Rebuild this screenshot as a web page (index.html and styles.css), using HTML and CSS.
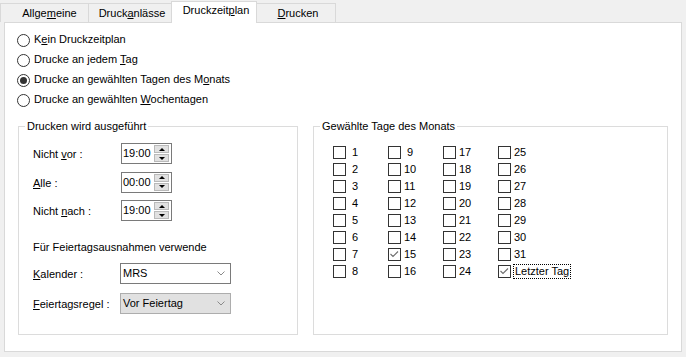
FILE: index.html
```html
<!DOCTYPE html>
<html lang="de">
<head>
<meta charset="utf-8">
<title>Druckzeitplan</title>
<link rel="stylesheet" href="styles.css">
</head>
<body>
<div class="dialog">
  <div class="tabs">
    <div class="tab t1">Allge<u>m</u>eine</div>
    <div class="tab t2">Druck<u>a</u>nlässe</div>
    <div class="tab t3 active">Druckzeit<u>p</u>lan</div>
    <div class="tab t4"><u>D</u>rucken</div>
  </div>
  <div class="panel">
    <div class="radios">
      <div class="radio"><span class="rb"></span><span>K<u>e</u>in Druckzeitplan</span></div>
      <div class="radio"><span class="rb"></span><span>Drucke an jedem <u>T</u>ag</span></div>
      <div class="radio"><span class="rb on"></span><span>Drucke an gewählten Tagen des M<u>o</u>nats</span></div>
      <div class="radio"><span class="rb"></span><span>Drucke an gewählten <u>W</u>ochentagen</span></div>
    </div>
    <div class="groups">
      <div class="group g1">
        <div class="gtitle">Drucken wird ausgeführt</div>
        <div class="times">
          <div class="row"><span class="lbl">Nicht <u>v</u>or :</span><span class="spin"><span class="val">19:00</span><span class="btns"><span class="ud"><i class="up"></i></span><span class="ud"><i class="dn"></i></span></span></span></div>
          <div class="row"><span class="lbl"><u>A</u>lle :</span><span class="spin"><span class="val">00:00</span><span class="btns"><span class="ud"><i class="up"></i></span><span class="ud"><i class="dn"></i></span></span></span></div>
          <div class="row"><span class="lbl">Nicht <u>n</u>ach :</span><span class="spin"><span class="val">19:00</span><span class="btns"><span class="ud"><i class="up"></i></span><span class="ud"><i class="dn"></i></span></span></span></div>
        </div>
        <div class="holiday">Für Feiertagsausnahmen verwende</div>
        <div class="crow first"><span class="lbl"><u>K</u>alender :</span><span class="combo"><span class="ctext">MRS</span><svg class="chev" width="8" height="5" viewBox="0 0 8 5"><polyline points="0.5,0.5 4,4 7.5,0.5" fill="none" stroke="#8a8a8a" stroke-width="1"/></svg></span></div>
        <div class="crow"><span class="lbl"><u>F</u>eiertagsregel :</span><span class="combo list"><span class="ctext">Vor Feiertag</span><svg class="chev" width="8" height="5" viewBox="0 0 8 5"><polyline points="0.5,0.5 4,4 7.5,0.5" fill="none" stroke="#8a8a8a" stroke-width="1"/></svg></span></div>
      </div>
      <div class="group g2">
        <div class="gtitle">Gewählte Tage des Monats</div>
        <div class="days">
          <div class="day"><span class="cb"></span><span class="t pad">1</span></div>
          <div class="day"><span class="cb"></span><span class="t pad">2</span></div>
          <div class="day"><span class="cb"></span><span class="t pad">3</span></div>
          <div class="day"><span class="cb"></span><span class="t pad">4</span></div>
          <div class="day"><span class="cb"></span><span class="t pad">5</span></div>
          <div class="day"><span class="cb"></span><span class="t pad">6</span></div>
          <div class="day"><span class="cb"></span><span class="t pad">7</span></div>
          <div class="day"><span class="cb"></span><span class="t pad">8</span></div>
          <div class="day"><span class="cb"></span><span class="t pad">9</span></div>
          <div class="day"><span class="cb"></span><span class="t">10</span></div>
          <div class="day"><span class="cb"></span><span class="t">11</span></div>
          <div class="day"><span class="cb"></span><span class="t">12</span></div>
          <div class="day"><span class="cb"></span><span class="t">13</span></div>
          <div class="day"><span class="cb"></span><span class="t">14</span></div>
          <div class="day"><span class="cb"><svg width="11" height="11" viewBox="0 0 11 11"><polyline points="1.5,5 4,7.5 9,2.5" fill="none" stroke="#6e6e6e" stroke-width="1.1"/></svg></span><span class="t">15</span></div>
          <div class="day"><span class="cb"></span><span class="t">16</span></div>
          <div class="day"><span class="cb"></span><span class="t">17</span></div>
          <div class="day"><span class="cb"></span><span class="t">18</span></div>
          <div class="day"><span class="cb"></span><span class="t">19</span></div>
          <div class="day"><span class="cb"></span><span class="t">20</span></div>
          <div class="day"><span class="cb"></span><span class="t">21</span></div>
          <div class="day"><span class="cb"></span><span class="t">22</span></div>
          <div class="day"><span class="cb"></span><span class="t">23</span></div>
          <div class="day"><span class="cb"></span><span class="t">24</span></div>
          <div class="day"><span class="cb"></span><span class="t">25</span></div>
          <div class="day"><span class="cb"></span><span class="t">26</span></div>
          <div class="day"><span class="cb"></span><span class="t">27</span></div>
          <div class="day"><span class="cb"></span><span class="t">28</span></div>
          <div class="day"><span class="cb"></span><span class="t">29</span></div>
          <div class="day"><span class="cb"></span><span class="t">30</span></div>
          <div class="day"><span class="cb"></span><span class="t">31</span></div>
          <div class="day"><span class="cb"><svg width="11" height="11" viewBox="0 0 11 11"><polyline points="1.5,5 4,7.5 9,2.5" fill="none" stroke="#6e6e6e" stroke-width="1.1"/></svg></span><span class="focus">Letzter Tag</span></div>
        </div>
      </div>
    </div>
  </div>
</div>
</body>
</html>
```

FILE: styles.css
```css
* { box-sizing: border-box; }
html, body { margin: 0; padding: 0; }
body {
  background: #f0f0f0;
  font-family: "Liberation Sans", Arial, sans-serif;
  font-size: 11px;
  line-height: 13px;
  color: #000;
}
u { text-decoration: underline; text-underline-offset: 1px; }

.dialog { width: 686px; height: 357px; }

.tabs { display: flex; align-items: flex-end; height: 22px; }
.tab {
  height: 19px;
  border: 1px solid #d9d9d9;
  border-bottom: none;
  background: #f0f0f0;
  padding-top: 3px;
  text-align: center;
  white-space: nowrap;
  margin-left: -1px;
  padding-left: 4px;
}
.t1 { width: 89px; margin-left: 0; padding-left: 10px; }
.t2 { width: 84px; }
.t3 { width: 86px; }
.t4 { width: 80px; }
.tab.active {
  height: 22px;
  margin-bottom: -1px;
  background: #fff;
  position: relative;
  z-index: 1;
  padding-top: 2px;
}

.panel {
  margin-left: 4px;
  width: 678px;
  height: 330px;
  border: 1px solid #d9d9d9;
  background: #fff;
  padding: 6px 0 0 12px;
}

.radio { display: flex; align-items: center; height: 20px; }
.rb {
  width: 13px; height: 13px;
  border: 1px solid #333;
  border-radius: 50%;
  margin: 2px 4px 0 0;
  background: #fff;
  display: flex; align-items: center; justify-content: center;
  flex: none;
}
.rb.on::after {
  content: "";
  width: 7px; height: 7px;
  border-radius: 50%;
  background: #333;
}

.groups { display: flex; gap: 15px; margin: 17px 0 0 1px; }
.group { border: 1px solid #dcdcdc; height: 209px; }
.g1 { width: 280px; }
.g2 { width: 355px; }
.gtitle {
  width: fit-content;
  margin: -7px 0 0 6px;
  padding: 0 2px;
  background: #fff;
  white-space: nowrap;
}

.times { margin-top: 10px; padding-left: 14px; display: flex; flex-direction: column; gap: 7.5px; }
.row { display: flex; align-items: center; height: 21px; }
.lbl { width: 88px; padding-top: 2px; flex: none; }
.spin {
  width: 51px; height: 21px;
  border: 1px solid #7a7a7a;
  display: flex; align-items: center;
  padding-left: 1px;
}
.val { flex: 1; }
.btns { width: 15px; height: 17px; display: flex; flex-direction: column; gap: 1px; margin-right: 2px; }
.ud {
  flex: 1;
  background: #e1e1e1;
  border: 1px solid #b9b9b9;
  display: flex; align-items: center; justify-content: center;
}
.up { width: 0; height: 0; border-left: 3px solid transparent; border-right: 3px solid transparent; border-bottom: 3px solid #000; }
.dn { width: 0; height: 0; border-left: 3px solid transparent; border-right: 3px solid transparent; border-top: 3px solid #000; }

.holiday { padding-left: 14px; margin-top: 19.5px; }
.crow { display: flex; align-items: center; height: 21px; padding-left: 14px; margin-top: 9px; }
.crow.first { margin-top: 9.5px; }
.combo {
  width: 111px; height: 21px;
  margin-left: -1px;
  border: 1px solid #7a7a7a;
  background: #fff;
  display: flex; align-items: center;
  padding-left: 2px;
}
.combo.list { background: #e1e1e1; border-color: #adadad; }
.ctext { flex: 1; }
.chev { margin-right: 5px; flex: none; }

.days {
  margin-top: 11px;
  padding-left: 19px;
  display: grid;
  grid-template-columns: repeat(4, 55px);
  grid-template-rows: repeat(8, 17px);
  grid-auto-flow: column;
}
.day { display: flex; align-items: center; white-space: nowrap; }
.cb {
  width: 13px; height: 13px;
  border: 1px solid #333;
  background: #fff;
  flex: none;
  display: flex; align-items: center; justify-content: center;
}
.t { margin-left: 3px; }
.t.pad { padding-left: 3px; }
.focus {
  margin-left: 2px;
  border: 1px dotted #000;
  padding: 0 1px;
  line-height: 13px;
}
```
